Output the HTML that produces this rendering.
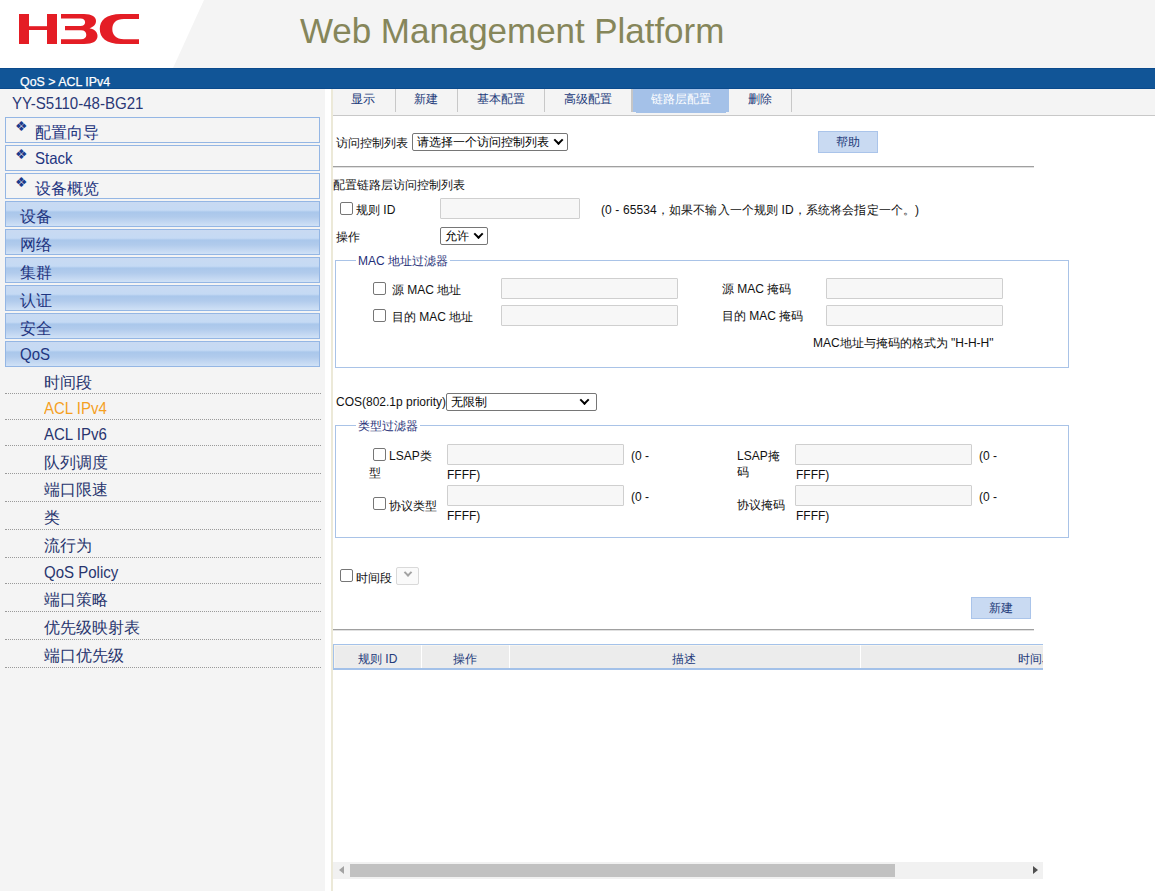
<!DOCTYPE html>
<html><head><meta charset="utf-8"><style>
*{box-sizing:border-box;margin:0;padding:0}
html,body{width:1155px;height:891px;overflow:hidden;background:#fff;font-family:"Liberation Sans",sans-serif;}
.a{position:absolute;white-space:nowrap}
#hdr{position:absolute;left:0;top:0;width:1155px;height:68px;background:#f4f4f4}
#hdrw{position:absolute;left:0;top:0;width:1155px;height:68px;background:#fff;clip-path:polygon(0 0,204px 0,173px 68px,0 68px)}
#bar{position:absolute;left:0;top:68px;width:1155px;height:21px;background:#115597;border-top:1px solid #0b4a8c;border-bottom:1px solid #0b4a8c}
#left{position:absolute;left:0;top:89px;width:325px;height:802px;background:#f4f4f4}
#vline{position:absolute;left:331px;top:89px;width:2px;height:802px;background:#ece9d8}
.nb{position:absolute;left:5px;width:315px;height:26px;border:1px solid #94b6e4;background:#f4f4f4}
.nb.g{background:linear-gradient(#c9daf2 0%,#c5daf4 34%,#aac7eb 42%,#b1cbec 62%,#d0e1f6 100%)}
.nt{position:absolute;white-space:nowrap;font-size:16px;line-height:16px;color:#1f3580}
.dm{position:absolute;left:15px;font-size:14px;line-height:14px;color:#1b3a8c}
.sl{position:absolute;left:5px;width:316px;height:1px;border-top:1px dotted #9a9a9a}
.st{position:absolute;left:44px;white-space:nowrap;font-size:16px;line-height:16px;color:#28346e}
.st.o{color:#f5a01f}
.lat{font-size:16.5px;transform:scaleX(0.91);transform-origin:0 0;margin-top:-2px}
.nt.lat{margin-top:-3px}.st.lat{margin-top:-1px}
#tabbar{position:absolute;left:333px;top:89px;width:822px;height:27px;background:#f4f4f4;border-bottom:1px solid #c8c8c8}
.tab{position:absolute;top:93px;font-size:12px;line-height:12px;color:#233a7a;white-space:nowrap}
.sep{position:absolute;top:89px;width:1px;height:23px;background:#c8c8c8}
.t{position:absolute;white-space:nowrap;font-size:12px;line-height:12px;color:#111}
.cb{position:absolute;width:13px;height:13px;border:1px solid #767676;border-radius:2px;background:#fff}
.inp{position:absolute;background:#f7f7f7;border:1px solid #cfcfcf;border-radius:1px}
.sel{position:absolute;border:1px solid #767676;border-radius:2px;background:#fff}
.sel.dis{border-color:#d9d9d9;background:#fafafa}
.st2{position:absolute;top:2px;font-size:12px;line-height:12px;white-space:nowrap;color:#000}
.chev{position:absolute;top:4px;width:7px;height:7px;border-right:2px solid #000;border-bottom:2px solid #000;transform:rotate(45deg) translate(-1px,-1px)}
.chev.g{border-color:#a3a3a3;width:6px;height:6px}
.fs{position:absolute;border:1px solid #a9c3e7}
.leg{position:absolute;background:#fff;font-size:12px;line-height:12px;color:#1f2f78;padding:0 2px;white-space:nowrap}
.btn{position:absolute;background:#c9daf2;border:1px solid #aac4ea;font-size:12px;color:#233a7a;text-align:center}
.hr{position:absolute;height:2px;border-top:1px solid #a0a0a0;border-bottom:1px solid #e0e0e0}
#thead{position:absolute;left:333px;top:644px;width:710px;height:26px;background:#ececec;border-top:1px solid #a4c2ea;border-left:1px solid #a4c2ea;border-bottom:2px solid #a3c1e9;box-shadow:inset 1px 1px 0 #f6f4ef}
.csep{position:absolute;top:645px;width:1px;height:23px;background:#fff}
.th{position:absolute;top:653px;font-size:12px;line-height:12px;color:#233a7a;white-space:nowrap}
#sbar{position:absolute;left:333px;top:862px;width:710px;height:17px;background:#f1f1f1}
</style></head><body>
<div id="hdr"></div><div id="hdrw"></div>
<svg class="a" style="left:0;top:0" width="150" height="60" viewBox="0 0 150 60">
<g fill="#e41d25">
<rect x="19" y="14" width="10" height="30"/><rect x="47" y="14" width="10" height="30"/><rect x="28" y="26.2" width="20" height="3.8"/>
<path d="M61,14 L84,14 C92,14 96,17 96,21 C96,24.5 93.5,27 89.5,28.2 C94.5,29 97.5,32 97.5,36 C97.5,41 93,44 84,44 L61,44 L61,39.2 L81,39.2 C84.5,39.2 86.3,37.6 86.3,35 C86.3,32 84.5,30.2 81,30.2 L65,30.2 L65,26.1 L80.5,26.1 C83.5,26.1 85.1,24.5 85.1,22.3 C85.1,20 83.5,18.5 80.5,18.5 L61,18.5 Z"/>
<path d="M139,14 L121,14 C106,14 99.8,20.5 99.8,29 C99.8,37.5 106,44 121,44 L139,44 L139,39.2 L124,39.2 C116,39.2 112.3,35 112.3,29 C112.3,23 116,18.9 124,18.9 L139,18.9 Z"/>
</g></svg>
<div class="a" style="left:300px;top:13px;font-size:35px;line-height:35px;color:#86865a;letter-spacing:-0.05px">Web Management Platform</div>
<div id="bar"></div>
<div class="a" style="left:20px;top:76px;font-size:12.4px;line-height:13px;color:#fff;-webkit-text-stroke:0.25px #fff">QoS &gt; ACL IPv4</div>
<div id="left"></div>
<div class="a" style="left:12px;top:95px;font-size:16.5px;line-height:16px;color:#2a3876;transform:scaleX(0.913);transform-origin:0 0">YY-S5110-48-BG21</div>
<div class="nb" style="top:117px"></div><div class="dm" style="top:119px">❖</div><div class="nt" style="left:35px;top:125px">配置向导</div>
<div class="nb" style="top:145px"></div><div class="dm" style="top:147px">❖</div><div class="nt lat" style="left:35px;top:153px">Stack</div>
<div class="nb" style="top:173px"></div><div class="dm" style="top:175px">❖</div><div class="nt" style="left:35px;top:181px">设备概览</div>
<div class="nb g" style="top:201px"></div><div class="nt" style="left:20px;top:209px">设备</div>
<div class="nb g" style="top:229px"></div><div class="nt" style="left:20px;top:237px">网络</div>
<div class="nb g" style="top:257px"></div><div class="nt" style="left:20px;top:265px">集群</div>
<div class="nb g" style="top:285px"></div><div class="nt" style="left:20px;top:293px">认证</div>
<div class="nb g" style="top:313px"></div><div class="nt" style="left:20px;top:321px">安全</div>
<div class="nb g" style="top:341px"></div><div class="nt lat" style="left:20px;top:349px">QoS</div>
<div class="sl" style="top:393px"></div><div class="st" style="top:375px">时间段</div>
<div class="sl" style="top:419px"></div><div class="st o lat" style="top:401px">ACL IPv4</div>
<div class="sl" style="top:445px"></div><div class="st lat" style="top:427px">ACL IPv6</div>
<div class="sl" style="top:473px"></div><div class="st" style="top:455px">队列调度</div>
<div class="sl" style="top:501px"></div><div class="st" style="top:482px">端口限速</div>
<div class="sl" style="top:529px"></div><div class="st" style="top:510px">类</div>
<div class="sl" style="top:557px"></div><div class="st" style="top:538px">流行为</div>
<div class="sl" style="top:583px"></div><div class="st lat" style="top:565px">QoS Policy</div>
<div class="sl" style="top:611px"></div><div class="st" style="top:592px">端口策略</div>
<div class="sl" style="top:639px"></div><div class="st" style="top:620px">优先级映射表</div>
<div class="sl" style="top:667px"></div><div class="st" style="top:648px">端口优先级</div>
<div id="vline"></div>

<div id="tabbar"></div>
<div class="sep" style="left:395px"></div><div class="sep" style="left:457px"></div><div class="sep" style="left:544px"></div><div class="sep" style="left:631px;width:2px;background:#c6c6c6"></div><div class="sep" style="left:791px"></div>
<div class="a" style="left:633px;top:89px;width:96px;height:23px;background:#a4c1e8"></div><div class="a" style="left:636px;top:112px;width:90px;height:1px;background:#a4c1e8"></div>
<div class="tab" style="left:351px">显示</div>
<div class="tab" style="left:414px">新建</div>
<div class="tab" style="left:477px">基本配置</div>
<div class="tab" style="left:564px">高级配置</div>
<div class="tab" style="left:651px;color:#fff">链路层配置</div>
<div class="tab" style="left:748px">删除</div>

<div class="t" style="left:336px;top:137px">访问控制列表</div>
<div class="sel" style="left:412px;top:133px;width:156px;height:18px"><span class="st2" style="left:4px">请选择一个访问控制列表</span><span class="chev" style="left:142px"></span></div>
<div class="btn" style="left:818px;top:131px;width:60px;height:22px;line-height:20px">帮助</div>
<div class="hr" style="left:333px;top:166px;width:701px"></div>

<div class="t" style="left:333px;top:179px">配置链路层访问控制列表</div>
<div class="cb" style="left:340px;top:202px"></div>
<div class="t" style="left:356px;top:204px">规则 ID</div>
<div class="inp" style="left:440px;top:198px;width:140px;height:21px"></div>
<div class="t" style="left:601px;top:204px;letter-spacing:0.12px">(0 - 65534，如果不输入一个规则 ID，系统将会指定一个。)</div>
<div class="t" style="left:336px;top:231px">操作</div>
<div class="sel" style="left:440px;top:227px;width:48px;height:18px"><span class="st2" style="left:4px">允许</span><span class="chev" style="left:34px"></span></div>

<div class="fs" style="left:335px;top:260px;width:734px;height:108px"></div>
<div class="leg" style="left:356px;top:255px">MAC 地址过滤器</div>
<div class="cb" style="left:373px;top:282px"></div>
<div class="t" style="left:392px;top:284px">源 MAC 地址</div>
<div class="inp" style="left:501px;top:278px;width:177px;height:21px"></div>
<div class="t" style="left:722px;top:283px">源 MAC 掩码</div>
<div class="inp" style="left:826px;top:278px;width:177px;height:21px"></div>
<div class="cb" style="left:373px;top:309px"></div>
<div class="t" style="left:392px;top:311px">目的 MAC 地址</div>
<div class="inp" style="left:501px;top:305px;width:177px;height:21px"></div>
<div class="t" style="left:722px;top:310px">目的 MAC 掩码</div>
<div class="inp" style="left:826px;top:305px;width:177px;height:21px"></div>
<div class="t" style="left:813px;top:337px">MAC地址与掩码的格式为 "H-H-H"</div>

<div class="t" style="left:336px;top:396px">COS(802.1p priority)</div>
<div class="sel" style="left:446px;top:393px;width:151px;height:18px"><span class="st2" style="left:4px">无限制</span><span class="chev" style="left:134px"></span></div>

<div class="fs" style="left:335px;top:425px;width:734px;height:113px"></div>
<div class="leg" style="left:356px;top:420px">类型过滤器</div>
<div class="cb" style="left:373px;top:448px"></div>
<div class="t" style="left:389px;top:450px">LSAP类</div>
<div class="t" style="left:369px;top:467px">型</div>
<div class="inp" style="left:447px;top:444px;width:177px;height:21px"></div>
<div class="t" style="left:631px;top:450px">(0 -</div>
<div class="t" style="left:447px;top:469px">FFFF)</div>
<div class="t" style="left:737px;top:450px">LSAP掩</div>
<div class="t" style="left:737px;top:466px">码</div>
<div class="inp" style="left:795px;top:444px;width:177px;height:21px"></div>
<div class="t" style="left:979px;top:450px">(0 -</div>
<div class="t" style="left:796px;top:469px">FFFF)</div>
<div class="cb" style="left:373px;top:497px"></div>
<div class="t" style="left:389px;top:500px">协议类型</div>
<div class="inp" style="left:447px;top:485px;width:177px;height:21px"></div>
<div class="t" style="left:631px;top:491px">(0 -</div>
<div class="t" style="left:447px;top:510px">FFFF)</div>
<div class="t" style="left:737px;top:499px">协议掩码</div>
<div class="inp" style="left:795px;top:485px;width:177px;height:21px"></div>
<div class="t" style="left:979px;top:491px">(0 -</div>
<div class="t" style="left:796px;top:510px">FFFF)</div>

<div class="cb" style="left:340px;top:569px"></div>
<div class="t" style="left:356px;top:572px">时间段</div>
<div class="sel dis" style="left:396px;top:567px;width:23px;height:18px"><span class="chev g" style="left:8px;top:3px"></span></div>
<div class="btn" style="left:971px;top:597px;width:60px;height:22px;line-height:20px">新建</div>
<div class="hr" style="left:333px;top:629px;width:701px"></div>

<div id="thead"></div>
<div class="csep" style="left:421px"></div><div class="csep" style="left:509px"></div><div class="csep" style="left:860px"></div>
<div class="th" style="left:358px">规则 ID</div>
<div class="th" style="left:453px">操作</div>
<div class="th" style="left:672px">描述</div>
<div class="th" style="left:1018px;width:25px;overflow:hidden">时间段</div>

<div id="sbar"></div>
<div class="a" style="left:350px;top:864px;width:545px;height:13px;background:#c1c1c1"></div>
<div class="a" style="left:339px;top:866px;width:0;height:0;border-top:4px solid transparent;border-bottom:4px solid transparent;border-right:5px solid #a3a3a3"></div>
<div class="a" style="left:1033px;top:866px;width:0;height:0;border-top:4px solid transparent;border-bottom:4px solid transparent;border-left:5px solid #505050"></div>
</body></html>
